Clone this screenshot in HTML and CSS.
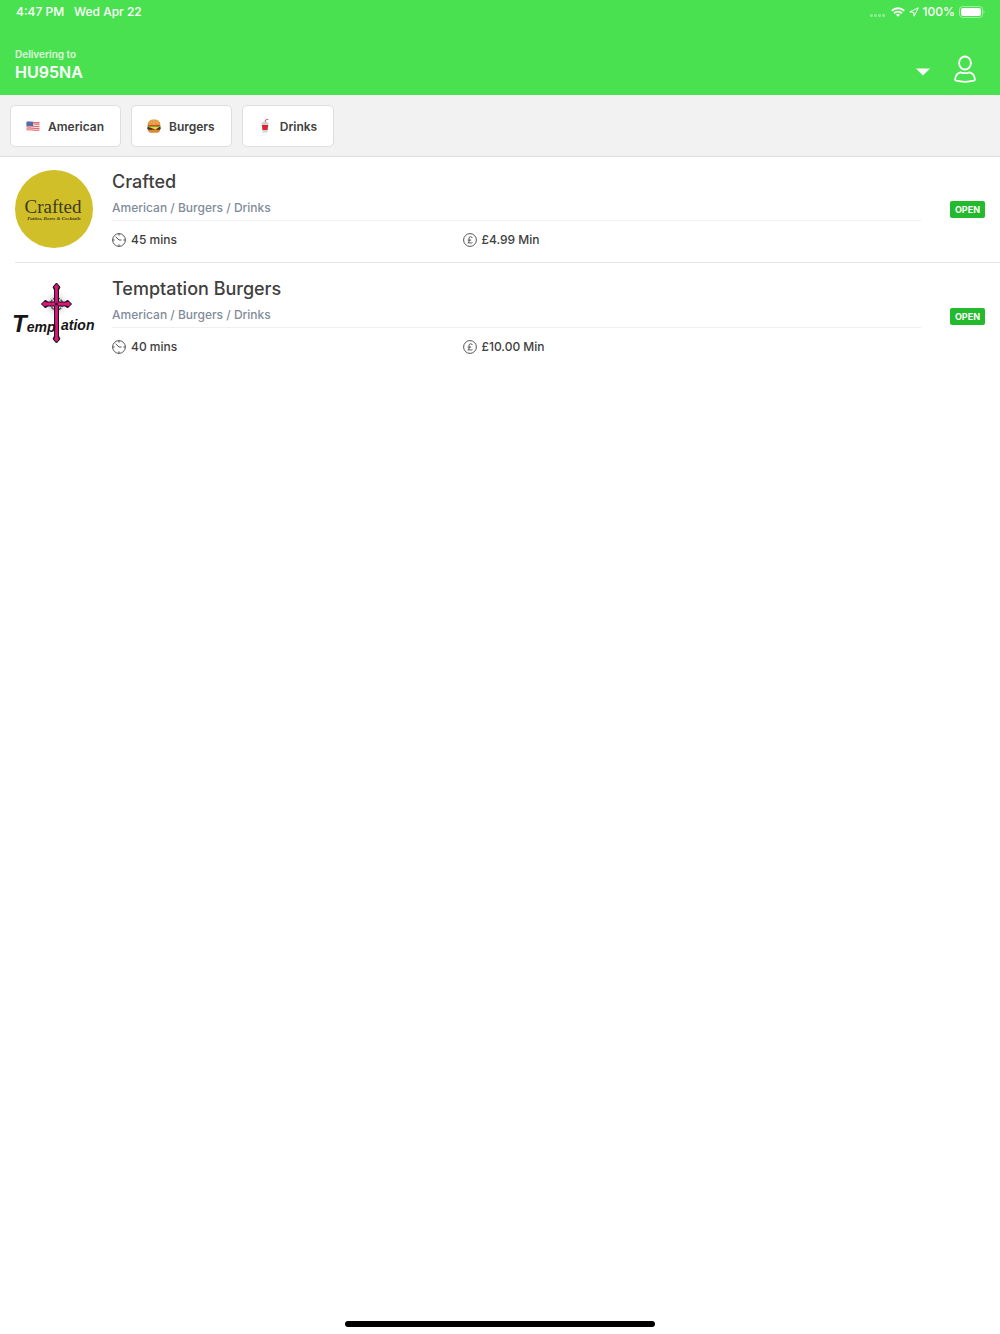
FILE: index.html
```html
<!DOCTYPE html>
<html lang="en">
<head>
    <meta charset="UTF-8">
    <meta name="viewport" content="width=device-width, initial-scale=1.0">
    <title>Restaurants</title>
    <link rel="stylesheet" href="styles.css">
</head>
<body>
    <header class="app-header">
        <!-- Status bar -->
        <div class="status-bar">
            <span>4:47 PM</span>
            <span>Wed Apr 22</span>
            <div class="status-icons">
                <svg width="18" height="12" viewBox="0 0 18 12" fill="#fff" opacity=".35" aria-hidden="true">
                    <rect x="1" y="8" width="3" height="3" rx="1"/>
                    <rect x="5" y="8" width="3" height="3" rx="1"/>
                    <rect x="9" y="8" width="3" height="3" rx="1"/>
                    <rect x="13" y="8" width="3" height="3" rx="1"/>
                </svg>
                <svg width="14" height="10" viewBox="0 0 14 10" fill="none" stroke="#fff" stroke-width="1.9" aria-hidden="true">
                    <path d="M.8 3.8a8.9 8.9 0 0 1 12.4 0M3.1 6.2a5.6 5.6 0 0 1 7.8 0"/>
                    <path d="M7 9.8 4.9 7.7a3 3 0 0 1 4.2 0z" fill="#fff" stroke="none"/>
                </svg>
                <svg width="10" height="10" viewBox="0 0 10 10" fill="none" stroke="#fff" stroke-width="1" stroke-linejoin="round" aria-hidden="true">
                    <path d="M9.3.8.8 4.900l3.900.4.400 3.900z"/>
                </svg>
                <span>100%</span>
                <svg width="26" height="12" viewBox="0 0 26 12" aria-hidden="true">
                    <rect x=".5" y=".5" width="23" height="11" rx="3" fill="none" stroke="#fff" stroke-opacity=".45"/>
                    <rect x="2" y="2" width="20" height="8" rx="2" fill="#fff"/>
                    <path d="M24.6 4.2c1 .4 1 3.2 0 3.6z" fill="#fff" fill-opacity=".6"/>
                </svg>
            </div>
        </div>

        <!-- Delivery address -->
        <div class="address-bar">
            <button type="button" class="address-button">
                <span class="address">
                    <span class="address-label">Delivering to</span>
                    <span class="postcode">HU95NA</span>
                </span>
                <svg width="14" height="8" viewBox="0 0 14 8" aria-hidden="true"><path d="M0 .5h14L7 7.5z" fill="#fff"/></svg>
            </button>
            <button type="button" class="account-button" aria-label="Account">
                <svg width="22" height="28" viewBox="0 0 22 28" fill="none" stroke="#fff" stroke-width="1.8" stroke-linejoin="round" aria-hidden="true">
                    <ellipse cx="11" cy="8" rx="5.9" ry="6.5"/>
                    <path d="M6.5 17.3C3.5 18 1.5 20.500 1.100 24.300c0 .8.4 1.200 1.100 1.400 5.600 1.400 12 1.400 17.600 0 .7-.2 1.100-.6 1.100-1.400-.4-3.800-2.400-6.300-5.400-7-3 1.200-6 1.200-9 0z"/>
                </svg>
            </button>
        </div>
    </header>

    <!-- Cuisine filters -->
    <nav class="filters" aria-label="Cuisines">
        <button type="button" class="filter">
            <svg width="14" height="14" viewBox="0 0 14 14" aria-hidden="true">
                <path d="M.5 2.8c4-1.300 8 1.200 13 .1v8.300c-4 1.300-8-1.100-13 0z" fill="#f3dfe0"/>
                <path d="M.5 4.800c4-1.300 8 1.200 13 .1M.5 7.200c4-1.300 8 1.200 13 .1M.5 9.200c4-1.300 8 1.200 13 .1M.5 11c4-1 8 1.200 13 0M5 3c3 .2 5 1 8.500.2" fill="none" stroke="#df6b74" stroke-width="1.1"/>
                <path d="M.5 2.800c2-.6 4-.4 6.500.1v4.400c-2.500-.4-4.500-.6-6.500-.1z" fill="#4d6ea8"/>
            </svg>
            American
        </button>
        <button type="button" class="filter">
            <svg width="14" height="14" viewBox="0 0 14 14" aria-hidden="true">
                <path d="M.8 10h12.400c0 2.500-1.400 3.700-3 3.700H3.800C2.200 13.700.8 12.500.8 10z" fill="#d98a35"/>
                <rect x=".3" y="7.5" width="13.4" height="3.2" rx="1.4" fill="#4d2a18"/>
                <path d="M.3 6.400h13.400v1.200l-2 .8-2-.6-2.500.8-2.500-.8-2.400.7-2-.9z" fill="#73a83a"/>
                <path d="M2 8h10l-3.500 2.800z" fill="#ffd23c"/>
                <path d="M1 6h12v.9H1z" fill="#d5382b"/>
                <path d="M.6 6C.6 2.400 3 .5 7 .5S13.400 2.400 13.400 6z" fill="#e49a43"/>
                <path d="M3.500 3h1M6.500 2h1M9.500 3.200h1M6.500 4.200h1" stroke="#fbdc9b" stroke-width=".8"/>
            </svg>
            Burgers
        </button>
        <button type="button" class="filter">
            <svg width="14" height="14" viewBox="0 0 14 14" aria-hidden="true">
                <path d="M7 4.500 7.400 1l3-.8" fill="none" stroke="#e05252" stroke-width="1"/>
                <path d="M3.500 4.500h7l-1.100 9H4.600z" fill="#d0d4d7"/>
                <path d="M3.900 6h6.300l-.7 5H4.500z" fill="#d92632"/>
                <path d="M3.300 4.700c0-2.200 7.400-2.200 7.400 0z" fill="#c5cbd0"/>
            </svg>
            Drinks
        </button>
    </nav>

    <!-- Restaurant list -->
    <main>
        <ul class="restaurants">
            <li>
                <a href="#crafted" class="restaurant">
                    <svg class="logo" viewBox="0 0 78 78" role="img" aria-label="Crafted logo">
                        <circle cx="39" cy="38" r="39" fill="#d0bf29"/>
                        <text x="38" y="42" class="crafted-name">Crafted</text>
                        <text x="39" y="49" class="crafted-tagline">Patties, Beers &amp; Cocktails</text>
                    </svg>
                    <div class="details">
                        <h2>Crafted</h2>
                        <p class="cuisines">American / Burgers / Drinks</p>
                        <div class="info">
                            <span class="info-item">
                                <svg width="14" height="14" viewBox="0 0 14 14" fill="none" stroke="#555" stroke-width="1" aria-hidden="true">
                                    <circle cx="7" cy="7" r="6.4"/>
                                    <path d="M7 .6v2M7 11.400v2M.6 7h2M11.400 7h2M3.600 3.800 7 7h2.500"/>
                                </svg>
                                45 mins
                            </span>
                            <span class="info-item">
                                <svg width="14" height="14" viewBox="0 0 14 14" fill="none" stroke="#555" stroke-width="1" aria-hidden="true">
                                    <circle cx="7" cy="7" r="6.4"/>
                                    <path d="M9.300 5C9 3.200 6 3.300 6 5.300c0 1.700 1 3.400-1.200 4.700 1.600-.8 3 .7 4.700-.4M4.600 7.100h3.600"/>
                                </svg>
                                £4.99 Min
                            </span>
                        </div>
                    </div>
                    <span class="badge">OPEN</span>
                </a>
            </li>
            <li>
                <a href="#temptation-burgers" class="restaurant">
                    <svg class="logo" viewBox="0 0 78 78" role="img" aria-label="Temptation logo">
                        <defs>
                            <radialGradient id="glow">
                                <stop offset="0" stop-color="#999"/>
                                <stop offset="1" stop-color="#fff" stop-opacity="0"/>
                            </radialGradient>
                        </defs>
                        <circle cx="41" cy="26" r="15" fill="url(#glow)"/>
                        <circle cx="41.5" cy="26" r="6" fill="none" stroke="#555" stroke-width="1.5" stroke-dasharray="3 1"/>
                        <path d="M41.500 8v55M29 26h25" stroke="#161616" stroke-width="5"/>
                        <path d="m41.500 5 3.500 4-2 4h-3l-2-4zM26.500 26l4-4 3 3v2l-3 3zM56.500 26l-4-4-3 3v2l3 3zM41.500 65l3.500-4-2-4h-3l-2 4z" fill="#161616" stroke="#161616"/>
                        <path d="M41.500 9v52M30 26h23" stroke="#e2137e" stroke-width="2.8"/>
                        <path d="m41.500 6 2.500 3-2.500 3-2.500-3zM27 26l3-2.500 3 2.500-3 2.500zM56 26l-3-2.500-3 2.500 3 2.500zM41.500 64l2.500-3-2.500-3-2.500 3z" fill="#e2137e"/>
                        <circle cx="41.5" cy="26" r="1.5" fill="#161616"/>
                        <text x="-3" y="54" class="temptation-name"><tspan class="initial">T</tspan>emp</text>
                        <text x="46" y="52" class="temptation-name">ation</text>
                    </svg>
                    <div class="details">
                        <h2>Temptation Burgers</h2>
                        <p class="cuisines">American / Burgers / Drinks</p>
                        <div class="info">
                            <span class="info-item">
                                <svg width="14" height="14" viewBox="0 0 14 14" fill="none" stroke="#555" stroke-width="1" aria-hidden="true">
                                    <circle cx="7" cy="7" r="6.4"/>
                                    <path d="M7 .6v2M7 11.400v2M.6 7h2M11.400 7h2M3.600 3.800 7 7h2.500"/>
                                </svg>
                                40 mins
                            </span>
                            <span class="info-item">
                                <svg width="14" height="14" viewBox="0 0 14 14" fill="none" stroke="#555" stroke-width="1" aria-hidden="true">
                                    <circle cx="7" cy="7" r="6.4"/>
                                    <path d="M9.300 5C9 3.200 6 3.300 6 5.300c0 1.700 1 3.400-1.200 4.700 1.600-.8 3 .7 4.700-.4M4.600 7.100h3.600"/>
                                </svg>
                                £10.00 Min
                            </span>
                        </div>
                    </div>
                    <span class="badge">OPEN</span>
                </a>
            </li>
        </ul>
    </main>

    <div class="home-indicator"></div>
</body>
</html>
```
FILE: styles.css
```css
:root {
    --green: #4ae150;
    --badge-green: #23ba2e;
    --text: #404040;
    --muted: #7f8c9b;
    --line: #e6e6e6;
}

* {
    box-sizing: border-box;
}

body {
    display: flex;
    flex-direction: column;
    min-height: 100vh;
    margin: 0;
    font-family: Inter, "Liberation Sans", sans-serif;
    color: var(--text);
    background-color: #fff;
}

button {
    padding: 0;
    border: 0;
    background: none;
    color: inherit;
    font: inherit;
    cursor: pointer;
}

svg {
    display: block;
    flex-shrink: 0;
}

.app-header {
    background-color: var(--green);
    color: #fff;
}

/* Status bar */
.status-bar {
    display: flex;
    align-items: center;
    gap: 10px;
    height: 23px;
    padding: 0 15px 0 16px;
    font-size: 12px;
    font-weight: 500;
}

.status-icons {
    display: flex;
    align-items: center;
    gap: 4px;
    margin-left: auto;
}

/* Address */
.address-bar {
    display: flex;
    align-items: center;
    gap: 24px;
    padding: 23px 24px 3px 15px;
}

.address-button {
    display: flex;
    flex: 1;
    align-items: flex-end;
    justify-content: space-between;
    padding-bottom: 10px;
    text-align: left;
}

.address-button > svg {
    margin-bottom: 6px;
}

.address {
    display: flex;
    flex-direction: column;
}

.address-label {
    font-size: 10px;
    font-weight: 600;
    line-height: 16px;
    opacity: 0.8;
}

.postcode {
    font-size: 16px;
    font-weight: 600;
    line-height: 20px;
}

/* Cuisine filters */
.filters {
    display: flex;
    gap: 10px;
    padding: 10px 10px 9px;
    border-bottom: 1px solid #dedede;
    background-color: #f2f2f2;
}

.filter {
    display: flex;
    align-items: center;
    gap: 8px;
    height: 42px;
    padding: 0 16px 0 15px;
    border: 1px solid #dedede;
    border-radius: 5px;
    background-color: #fff;
    font-size: 12px;
    font-weight: 600;
}

/* Restaurants */
.restaurants {
    margin: 0;
    padding: 0 0 0 15px;
    list-style: none;
}

.restaurants li + li {
    padding-top: 1px;
    border-top: 1px solid var(--line);
}

.restaurant {
    display: flex;
    align-items: center;
    padding: 13px 15px 13px 0;
    color: inherit;
    text-decoration: none;
}

.logo {
    width: 78px;
    height: 78px;
    overflow: visible;
}

.details {
    flex: 1;
    margin: 0 29px 0 19px;
}

.details h2 {
    margin: 0;
    font-size: 18px;
    font-weight: 500;
    line-height: 24px;
}

.cuisines {
    margin: 0;
    padding: 5px 0 3px;
    border-bottom: 1px solid #f0f0f0;
    color: var(--muted);
    font-size: 12px;
    font-weight: 500;
    line-height: 18px;
}

.info {
    display: grid;
    grid-template-columns: 13fr 17fr;
    padding-top: 10px;
    font-size: 12px;
    font-weight: 500;
    line-height: 18px;
}

.info-item {
    display: flex;
    align-items: center;
    gap: 5px;
}

.badge {
    padding: 0 5px;
    border-radius: 2px;
    background-color: var(--badge-green);
    color: #fff;
    font-size: 9px;
    font-weight: 700;
    line-height: 17px;
}

/* Logo lettering */
.crafted-name {
    fill: #3c3a20;
    font-family: "Liberation Serif", serif;
    font-size: 19px;
    text-anchor: middle;
}

.crafted-tagline {
    fill: #3c3a20;
    font-family: "Liberation Serif", serif;
    font-size: 5px;
    font-style: italic;
    font-weight: 700;
    text-anchor: middle;
}

.temptation-name {
    fill: #161616;
    font-family: "Liberation Sans", sans-serif;
    font-size: 14px;
    font-style: italic;
    font-weight: 700;
}

.temptation-name .initial {
    font-size: 24px;
}

.home-indicator {
    width: 31%;
    height: 6px;
    margin: auto auto 7px;
    border-radius: 3px;
    background-color: #000;
}
```
